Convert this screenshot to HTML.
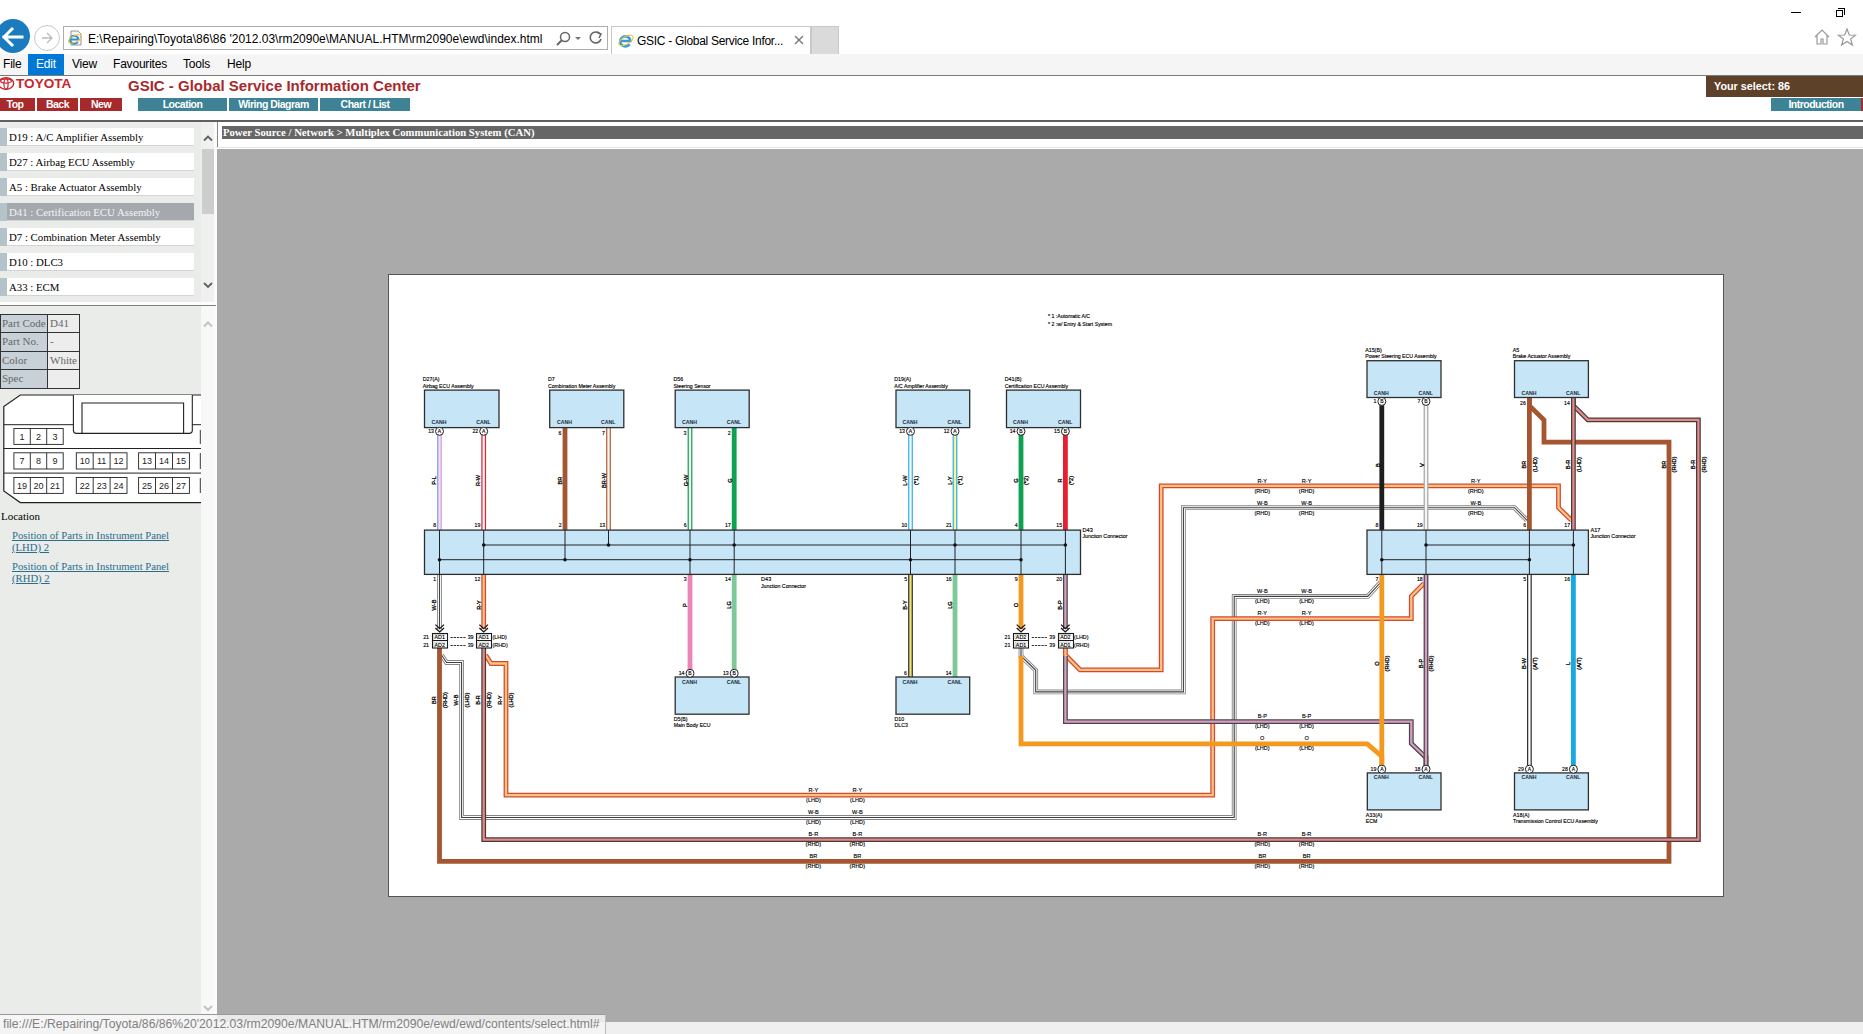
<!DOCTYPE html>
<html><head><meta charset="utf-8">
<style>
*{margin:0;padding:0;box-sizing:border-box}
html,body{width:1863px;height:1034px;overflow:hidden;background:#fff;font-family:"Liberation Sans",sans-serif}
.a{position:absolute}
.menu span{position:absolute;top:0;height:21px;line-height:21px;font-size:12px;letter-spacing:-0.2px;color:#000}
.btn{position:absolute;height:13px;line-height:13px;font-size:10.5px;letter-spacing:-0.5px;font-weight:bold;color:#fff;text-align:center}
.red{background:#a8292c}
.teal{background:#3d8295}
.li{position:absolute;left:0;width:194px;height:18px}
.li .s{position:absolute;left:0;top:0;width:7px;height:18px;background:#b4c2ca}
.li .t{position:absolute;left:7px;top:0;width:187px;height:18px;background:#fff;border-bottom:1px solid #d4d4d4;font-family:"Liberation Serif",serif;font-size:10.8px;line-height:18px;padding-left:2px;color:#000}
.li.sel .t{background:#a4a9ae;color:#f4f4f4}
.pt td{border:1px solid #333;font-family:"Liberation Serif",serif;font-size:11px;color:#666;height:19px;padding:0 2px}
</style></head><body>
<!-- title bar / window -->
<div class="a" style="left:1791px;top:12px;width:10px;height:1px;background:#000"></div>
<div class="a" style="left:1836px;top:10px;width:7px;height:7px;border:1px solid #000;background:#fff"></div>
<div class="a" style="left:1838px;top:8px;width:7px;height:7px;border-top:1px solid #000;border-right:1px solid #000"></div>

<!-- back / forward -->
<div class="a" style="left:-4px;top:19px;width:34px;height:34px;border-radius:50%;background:#1a7bbf;overflow:hidden"></div>
<div class="a" style="left:0;top:53px;width:40px;height:2px;background:#fff"></div>
<svg class="a" style="left:0;top:25px" width="30" height="26"><path d="M4 12 L12 4 M4 12 L12 20 M4 12 L22 12" stroke="#fff" stroke-width="3" fill="none" stroke-linecap="square"/></svg>
<div class="a" style="left:34px;top:25px;width:26px;height:26px;border-radius:50%;border:1px solid #c8c8c8"></div>
<svg class="a" style="left:34px;top:25px" width="26" height="26"><path d="M8 13 H18 M13 8 L18 13 L13 18" stroke="#bbb" stroke-width="1.3" fill="none"/></svg>

<!-- address bar -->
<div class="a" style="left:63px;top:26px;width:545px;height:24px;border:1px solid #adadad;background:#fff"></div>
<svg class="a" style="left:66px;top:29px" width="18" height="18"><path d="M5 2 H12 L15 5 V16 H5Z" fill="#f6f6f6" stroke="#8a8a8a" stroke-width="0.9"/><path d="M4.5 10.5 H12.5 A4.2 4 0 1 0 11.8 13" fill="none" stroke="#2f8fdc" stroke-width="2"/><ellipse cx="8.8" cy="10" rx="7" ry="3.2" transform="rotate(-28 8.8 10)" fill="none" stroke="#f0c020" stroke-width="0.9"/></svg>
<div class="a" style="left:88px;top:30px;font-size:12px;line-height:18px;color:#000;white-space:nowrap">E:\Repairing\Toyota\86\86 '2012.03\rm2090e\MANUAL.HTM\rm2090e\ewd\index.html</div>
<svg class="a" style="left:555px;top:30px" width="50" height="18"><circle cx="10" cy="7" r="4.5" stroke="#666" stroke-width="1.5" fill="none"/><path d="M7 10 L2 15" stroke="#666" stroke-width="2"/><path d="M20 7 L26 7 L23 10Z" fill="#777"/><path d="M45 4 A5.5 5.5 0 1 0 46 9" stroke="#666" stroke-width="1.6" fill="none"/><path d="M42 2 L46 4 L44 8" stroke="#666" stroke-width="1.5" fill="none"/></svg>

<!-- tab -->
<div class="a" style="left:611px;top:26px;width:200px;height:29px;border:1px solid #c8c8c8;border-bottom:none;background:#fff"></div>
<svg class="a" style="left:617px;top:31px" width="18" height="18"><path d="M3.5 10 H13.5 A5.2 5 0 1 0 12.6 13.2" fill="none" stroke="#3a9be0" stroke-width="2.6"/><ellipse cx="9" cy="9.5" rx="8" ry="3.8" transform="rotate(-30 9 9.5)" fill="none" stroke="#f2c230" stroke-width="1.1"/></svg>
<div class="a" style="left:637px;top:32px;font-size:12px;letter-spacing:-0.29px;line-height:18px;color:#000;white-space:nowrap">GSIC - Global Service Infor...</div>
<svg class="a" style="left:794px;top:35px" width="10" height="10"><path d="M1 1 L9 9 M9 1 L1 9" stroke="#777" stroke-width="1.4"/></svg>
<div class="a" style="left:811px;top:26px;width:28px;height:28px;background:#dadada;border:1px solid #c8c8c8;border-bottom:none"></div>

<!-- home / star -->
<svg class="a" style="left:1812px;top:27px" width="45" height="20"><path d="M3 10 L10 3 L17 10 M5 8 V17 H9 V12 H11 V17 H15 V8" stroke="#999" stroke-width="1.2" fill="none"/><path d="M35 2 L37.3 8 L43.5 8.2 L38.6 12 L40.4 18 L35 14.5 L29.6 18 L31.4 12 L26.5 8.2 L32.7 8Z" stroke="#999" stroke-width="1.2" fill="none"/></svg>

<!-- menu bar -->
<div class="a menu" style="left:0;top:54px;width:1863px;height:21px;background:#f5f5f5">
  <div class="a" style="left:28px;top:0;width:36px;height:21px;background:#0078d7"></div>
  <span style="left:3px">File</span>
  <span style="left:36px;color:#fff">Edit</span>
  <span style="left:72px">View</span>
  <span style="left:113px">Favourites</span>
  <span style="left:183px">Tools</span>
  <span style="left:227px">Help</span>
</div>
<div class="a" style="left:0;top:75px;width:1863px;height:1px;background:#7a7a7a"></div>

<!-- page header -->
<svg class="a" style="left:0;top:76px" width="16" height="15"><ellipse cx="6" cy="7.4" rx="7.6" ry="5.8" fill="none" stroke="#c8262c" stroke-width="1.4"/><ellipse cx="6" cy="7.9" rx="2.1" ry="5.3" fill="none" stroke="#c8262c" stroke-width="1.2"/><ellipse cx="6" cy="5" rx="5.4" ry="2.2" fill="none" stroke="#c8262c" stroke-width="1.2"/></svg>
<div class="a" style="left:16px;top:76px;font-size:13.6px;font-weight:bold;color:#c8262c;line-height:16px;letter-spacing:0px">TOYOTA</div>
<div class="a" style="left:128px;top:76px;font-size:15px;font-weight:bold;color:#a8292c;line-height:19px;white-space:nowrap">GSIC - Global Service Information Center</div>

<div class="btn red" style="left:-5px;top:98px;width:40px">Top</div>
<div class="btn red" style="left:37px;top:98px;width:41px">Back</div>
<div class="btn red" style="left:80px;top:98px;width:42px">New</div>
<div class="btn teal" style="left:138px;top:98px;width:89px">Location</div>
<div class="btn teal" style="left:229px;top:98px;width:89px">Wiring Diagram</div>
<div class="btn teal" style="left:320px;top:98px;width:90px">Chart / List</div>

<div class="a" style="left:1706px;top:76px;width:157px;height:21px;background:#5e4129;color:#fff;font-weight:bold;font-size:10.8px;line-height:21px;padding-left:8px">Your select: 86</div>
<div class="btn teal" style="left:1771px;top:98px;width:90px">Introduction</div>
<div class="a" style="left:1861px;top:98px;width:2px;height:13px;background:#a8292c"></div>

<div class="a" style="left:0;top:120px;width:1863px;height:2px;background:#606060"></div>

<!-- LEFT PANE -->
<div class="a" style="left:0;top:122px;width:214px;height:892px;background:#e9ece9"></div>
<div class="a" style="left:214px;top:122px;width:3px;height:892px;background:#fbfbfb"></div>
<!-- list scrollbar -->
<div class="a" style="left:201px;top:122px;width:13px;height:182px;background:#f0f0f0"></div>
<div class="a" style="left:202px;top:149px;width:12px;height:65px;background:#cdcdcd"></div>
<svg class="a" style="left:201px;top:132px" width="14" height="12"><path d="M3 8.5 L7 4.5 L11 8.5" stroke="#606060" stroke-width="1.8" fill="none"/></svg>
<svg class="a" style="left:201px;top:279px" width="14" height="12"><path d="M3 4 L7 8 L11 4" stroke="#606060" stroke-width="1.8" fill="none"/></svg>

<div class="li" style="top:128px"><div class="s"></div><div class="t">D19 : A/C Amplifier Assembly</div></div>
<div class="li" style="top:153px"><div class="s"></div><div class="t">D27 : Airbag ECU Assembly</div></div>
<div class="li" style="top:178px"><div class="s"></div><div class="t">A5 : Brake Actuator Assembly</div></div>
<div class="li sel" style="top:203px"><div class="s"></div><div class="t">D41 : Certification ECU Assembly</div></div>
<div class="li" style="top:228px"><div class="s"></div><div class="t">D7 : Combination Meter Assembly</div></div>
<div class="li" style="top:253px"><div class="s"></div><div class="t">D10 : DLC3</div></div>
<div class="li" style="top:278px"><div class="s"></div><div class="t">A33 : ECM</div></div>

<div class="a" style="left:0;top:302px;width:214px;height:3px;background:#fdfdfd"></div><div class="a" style="left:0;top:305px;width:216px;height:1px;background:#808080"></div>
<div class="a" style="left:201px;top:306px;width:13px;height:708px;background:#f8f8f8"></div>
<svg class="a" style="left:201px;top:318px" width="14" height="12"><path d="M3 8.5 L7 4.5 L11 8.5" stroke="#c4c4c4" stroke-width="2" fill="none"/></svg>
<svg class="a" style="left:201px;top:1002px" width="14" height="12"><path d="M3 4 L7 8 L11 4" stroke="#c4c4c4" stroke-width="2" fill="none"/></svg>


<!-- part table -->
<div class="a" style="left:0;top:314px;width:81px;height:75px">
 <div class="a" style="left:0;top:0;width:48px;height:19px;background:#c9d1d8;border:1px solid #333"></div>
 <div class="a" style="left:47px;top:0;width:33px;height:19px;background:#ededed;border:1px solid #333"></div>
 <div class="a" style="left:0;top:18px;width:48px;height:20px;background:#c9d1d8;border:1px solid #333"></div>
 <div class="a" style="left:47px;top:18px;width:33px;height:20px;background:#ededed;border:1px solid #333"></div>
 <div class="a" style="left:0;top:37px;width:48px;height:19px;background:#c9d1d8;border:1px solid #333"></div>
 <div class="a" style="left:47px;top:37px;width:33px;height:19px;background:#ededed;border:1px solid #333"></div>
 <div class="a" style="left:0;top:55px;width:48px;height:20px;background:#c9d1d8;border:1px solid #333"></div>
 <div class="a" style="left:47px;top:55px;width:33px;height:20px;background:#ededed;border:1px solid #333"></div>
 <div class="a" style="left:2px;top:1px;font-family:'Liberation Serif',serif;font-size:11px;line-height:17px;color:#666">Part Code</div>
 <div class="a" style="left:50px;top:1px;font-family:'Liberation Serif',serif;font-size:11px;line-height:17px;color:#666">D41</div>
 <div class="a" style="left:2px;top:19px;font-family:'Liberation Serif',serif;font-size:11px;line-height:17px;color:#666">Part No.</div>
 <div class="a" style="left:50px;top:19px;font-family:'Liberation Serif',serif;font-size:11px;line-height:17px;color:#666">-</div>
 <div class="a" style="left:2px;top:38px;font-family:'Liberation Serif',serif;font-size:11px;line-height:17px;color:#666">Color</div>
 <div class="a" style="left:50px;top:38px;font-family:'Liberation Serif',serif;font-size:11px;line-height:17px;color:#666">White</div>
 <div class="a" style="left:2px;top:56px;font-family:'Liberation Serif',serif;font-size:11px;line-height:17px;color:#666">Spec</div>
</div>
<!-- connector drawing -->
<svg class="a" style="left:0;top:390px" width="201" height="116" font-family="Liberation Sans, sans-serif">
 <path d="M201 5 H20.3 L3.8 16.5 V101 L20.3 112.6 H201" fill="#fff" stroke="#222" stroke-width="1.2"/>
 <path d="M3.8 34.7 H73.4 M192.3 34.7 H201 M3.8 58.5 H201 M3.8 83.1 H201" stroke="#222" stroke-width="1" fill="none"/>
 <path d="M73.4 5 V40.5 Q73.4 43.4 76.4 43.4 H189.3 Q192.3 43.4 192.3 40.5 V5" fill="#fff" stroke="#222" stroke-width="1.1"/>
 <path d="M82 43 V13 H183.6 V43" fill="none" stroke="#222" stroke-width="1.1"/>
 <g fill="none" stroke="#222" stroke-width="0.9">
  <rect x="13.9" y="38.5" width="49.3" height="15.9"/><path d="M30.3 38.5 V54.4 M46.7 38.5 V54.4"/>
  <rect x="13.9" y="62.8" width="49.3" height="16.2"/><path d="M30.3 62.8 V79 M46.7 62.8 V79"/>
  <rect x="76.3" y="62.8" width="50.7" height="16.2"/><path d="M93.2 62.8 V79 M110.1 62.8 V79"/>
  <rect x="138.6" y="62.8" width="50.8" height="16.2"/><path d="M155.5 62.8 V79 M172.5 62.8 V79"/>
  <rect x="13.9" y="87.5" width="49.3" height="15.9"/><path d="M30.3 87.5 V103.4 M46.7 87.5 V103.4"/>
  <rect x="76.3" y="87.5" width="50.7" height="15.9"/><path d="M93.2 87.5 V103.4 M110.1 87.5 V103.4"/>
  <rect x="138.6" y="87.5" width="50.8" height="15.9"/><path d="M155.5 87.5 V103.4 M172.5 87.5 V103.4"/>
  <path d="M200.3 40 V54 M200.3 63 V79 M200.3 88 V103"/>
 </g>
 <g font-size="9" fill="#222" text-anchor="middle">
  <text x="22.1" y="49.8">1</text><text x="38.5" y="49.8">2</text><text x="54.9" y="49.8">3</text>
  <text x="22.1" y="74.2">7</text><text x="38.5" y="74.2">8</text><text x="54.9" y="74.2">9</text>
  <text x="84.8" y="74.2">10</text><text x="101.7" y="74.2">11</text><text x="118.6" y="74.2">12</text>
  <text x="147.1" y="74.2">13</text><text x="164" y="74.2">14</text><text x="181" y="74.2">15</text>
  <text x="22.1" y="98.8">19</text><text x="38.5" y="98.8">20</text><text x="54.9" y="98.8">21</text>
  <text x="84.8" y="98.8">22</text><text x="101.7" y="98.8">23</text><text x="118.6" y="98.8">24</text>
  <text x="147.1" y="98.8">25</text><text x="164" y="98.8">26</text><text x="181" y="98.8">27</text>
 </g>
</svg>
<div class="a" style="left:1px;top:509px;font-family:'Liberation Serif',serif;font-size:11px;line-height:14px;color:#000">Location</div>
<div class="a" style="left:12px;top:529px;width:180px;font-family:'Liberation Serif',serif;font-size:10.7px;line-height:12px;color:#2b6c8c;text-decoration:underline">Position of Parts in Instrument Panel<br>(LHD) 2</div>
<div class="a" style="left:12px;top:560px;width:180px;font-family:'Liberation Serif',serif;font-size:10.7px;line-height:12px;color:#2b6c8c;text-decoration:underline">Position of Parts in Instrument Panel<br>(RHD) 2</div>

<!-- MAIN PANE -->
<div class="a" style="left:217px;top:122px;width:1646px;height:27px;background:#fff"></div>
<div class="a" style="left:217px;top:122px;width:1px;height:26px;background:#888"></div>
<div class="a" style="left:222px;top:126px;width:1641px;height:13px;background:#666"></div>
<div class="a" style="left:223px;top:125px;font-family:'Liberation Serif',serif;font-weight:bold;font-size:10.7px;line-height:15px;color:#fff;white-space:nowrap">Power Source / Network &gt; Multiplex Communication System (CAN)</div>
<div class="a" style="left:217px;top:147px;width:1646px;height:1px;background:#e4e4e4"></div>
<div class="a" style="left:217px;top:149px;width:1646px;height:873px;background:#aaa"></div>
<div class="a" style="left:0;top:1022px;width:1863px;height:12px;background:#efefef"></div>

<!-- DIAGRAM -->
<div class="a" style="left:388px;top:274px;width:1336px;height:623px;border:1px solid #555;background:#fff"></div>
<svg class="a" id="dg" style="left:0;top:0" width="1863" height="1034" viewBox="0 0 1863 1034">
<g font-family="Liberation Sans, sans-serif" stroke-width="0">
<rect x="437.1" y="431" width="4.8" height="99.1" fill="#ece2f6"/>
<rect x="437.1" y="431" width="1.3" height="99.1" fill="#8f9ee6"/>
<rect x="440.6" y="431" width="1.3" height="99.1" fill="#e2a4e2"/>
<polyline points="483.7,431.0 483.7,530.1" fill="none" stroke="#d8283a" stroke-width="4.8" stroke-linejoin="miter" stroke-miterlimit="3"/>
<polyline points="483.7,431.0 483.7,530.1" fill="none" stroke="#fff3f3" stroke-width="2.3" stroke-linejoin="miter" stroke-miterlimit="3"/>
<polyline points="565.0,427.6 565.0,530.1" fill="none" stroke="#a5552f" stroke-width="4.8" stroke-linejoin="miter" stroke-miterlimit="3"/>
<polyline points="608.5,427.6 608.5,530.1" fill="none" stroke="#b0623a" stroke-width="4.8" stroke-linejoin="miter" stroke-miterlimit="3"/>
<polyline points="608.5,427.6 608.5,530.1" fill="none" stroke="#fff8f2" stroke-width="2.3" stroke-linejoin="miter" stroke-miterlimit="3"/>
<polyline points="690.0,427.6 690.0,530.1" fill="none" stroke="#1f9c55" stroke-width="4.8" stroke-linejoin="miter" stroke-miterlimit="3"/>
<polyline points="690.0,427.6 690.0,530.1" fill="none" stroke="#eefaf2" stroke-width="2.3" stroke-linejoin="miter" stroke-miterlimit="3"/>
<polyline points="734.2,427.6 734.2,530.1" fill="none" stroke="#0ea14f" stroke-width="4.8" stroke-linejoin="miter" stroke-miterlimit="3"/>
<polyline points="910.5,431.0 910.5,530.1" fill="none" stroke="#38b2e6" stroke-width="4.8" stroke-linejoin="miter" stroke-miterlimit="3"/>
<polyline points="910.5,431.0 910.5,530.1" fill="none" stroke="#f4fbff" stroke-width="2.3" stroke-linejoin="miter" stroke-miterlimit="3"/>
<polyline points="955.0,431.0 955.0,530.1" fill="none" stroke="#38b2e6" stroke-width="4.8" stroke-linejoin="miter" stroke-miterlimit="3"/>
<polyline points="955.0,431.0 955.0,530.1" fill="none" stroke="#f6f39a" stroke-width="2.3" stroke-linejoin="miter" stroke-miterlimit="3"/>
<polyline points="1021.0,431.0 1021.0,530.1" fill="none" stroke="#0ea14f" stroke-width="4.8" stroke-linejoin="miter" stroke-miterlimit="3"/>
<polyline points="1065.4,431.0 1065.4,530.1" fill="none" stroke="#e8202e" stroke-width="4.8" stroke-linejoin="miter" stroke-miterlimit="3"/>
<polyline points="690.0,574.4 690.0,670.0" fill="none" stroke="#ea85b6" stroke-width="4.8" stroke-linejoin="miter" stroke-miterlimit="3"/>
<polyline points="734.2,574.4 734.2,670.0" fill="none" stroke="#7fc999" stroke-width="4.8" stroke-linejoin="miter" stroke-miterlimit="3"/>
<polyline points="910.5,574.4 910.5,677.0" fill="none" stroke="#333333" stroke-width="4.8" stroke-linejoin="miter" stroke-miterlimit="3"/>
<polyline points="910.5,574.4 910.5,677.0" fill="none" stroke="#f2e36a" stroke-width="2.3" stroke-linejoin="miter" stroke-miterlimit="3"/>
<polyline points="955.0,574.4 955.0,677.0" fill="none" stroke="#7fc999" stroke-width="4.8" stroke-linejoin="miter" stroke-miterlimit="3"/>
<polyline points="1529.4,574.4 1529.4,766.0" fill="none" stroke="#333333" stroke-width="4.8" stroke-linejoin="miter" stroke-miterlimit="3"/>
<polyline points="1529.4,574.4 1529.4,766.0" fill="none" stroke="#ffffff" stroke-width="2.3" stroke-linejoin="miter" stroke-miterlimit="3"/>
<polyline points="1573.4,574.4 1573.4,766.0" fill="none" stroke="#16a9e2" stroke-width="4.8" stroke-linejoin="miter" stroke-miterlimit="3"/>
<polyline points="1021.0,648.0 1021.0,656.0 1035.7,670.3 1035.7,691.9 1183.4,691.9 1183.4,507.7 1514.5,507.7 1527.0,520.3" fill="none" stroke="#858585" stroke-width="4.8" stroke-linejoin="miter" stroke-miterlimit="3"/>
<polyline points="1021.0,648.0 1021.0,656.0 1035.7,670.3 1035.7,691.9 1183.4,691.9 1183.4,507.7 1514.5,507.7 1527.0,520.3" fill="none" stroke="#ffffff" stroke-width="3.0" stroke-linejoin="miter" stroke-miterlimit="3"/>
<polyline points="1021.0,648.0 1021.0,656.0 1035.7,670.3 1035.7,691.9 1183.4,691.9 1183.4,507.7 1514.5,507.7 1527.0,520.3" fill="none" stroke="#404040" stroke-width="1.1" stroke-linejoin="miter"/>
<polyline points="1065.4,648.0 1065.4,655.0 1080.0,669.8 1161.2,669.8 1161.2,485.9 1558.5,485.9 1558.5,507.7 1571.5,520.3" fill="none" stroke="#d24836" stroke-width="4.8" stroke-linejoin="miter" stroke-miterlimit="3"/>
<polyline points="1065.4,648.0 1065.4,655.0 1080.0,669.8 1161.2,669.8 1161.2,485.9 1558.5,485.9 1558.5,507.7 1571.5,520.3" fill="none" stroke="#fdc47c" stroke-width="2.3" stroke-linejoin="miter" stroke-miterlimit="3"/>
<polyline points="441.5,655.0 446.5,662.5 461.6,662.5 461.6,817.5 1234.2,817.5 1234.2,596.4 1367.7,596.4 1381.0,582.0" fill="none" stroke="#858585" stroke-width="4.8" stroke-linejoin="miter" stroke-miterlimit="3"/>
<polyline points="441.5,655.0 446.5,662.5 461.6,662.5 461.6,817.5 1234.2,817.5 1234.2,596.4 1367.7,596.4 1381.0,582.0" fill="none" stroke="#ffffff" stroke-width="3.0" stroke-linejoin="miter" stroke-miterlimit="3"/>
<polyline points="441.5,655.0 446.5,662.5 461.6,662.5 461.6,817.5 1234.2,817.5 1234.2,596.4 1367.7,596.4 1381.0,582.0" fill="none" stroke="#404040" stroke-width="1.1" stroke-linejoin="miter"/>
<polyline points="485.7,655.0 491.0,663.5 506.0,663.5 506.0,795.2 1212.7,795.2 1212.7,618.6 1411.3,618.6 1411.3,596.2 1424.0,583.4" fill="none" stroke="#d24836" stroke-width="4.8" stroke-linejoin="miter" stroke-miterlimit="3"/>
<polyline points="485.7,655.0 491.0,663.5 506.0,663.5 506.0,795.2 1212.7,795.2 1212.7,618.6 1411.3,618.6 1411.3,596.2 1424.0,583.4" fill="none" stroke="#fdc47c" stroke-width="2.3" stroke-linejoin="miter" stroke-miterlimit="3"/>
<polyline points="439.5,648.0 439.5,861.4 1669.0,861.4 1669.0,442.2 1544.0,442.2 1544.0,420.0 1529.4,405.6 1529.4,397.5" fill="none" stroke="#a5552f" stroke-width="4.8" stroke-linejoin="miter" stroke-miterlimit="3"/>
<polyline points="483.7,648.0 483.7,839.6 1698.4,839.6 1698.4,419.9 1587.8,419.9 1573.4,405.6 1573.4,397.5" fill="none" stroke="#4a3a3a" stroke-width="4.8" stroke-linejoin="miter" stroke-miterlimit="3"/>
<polyline points="483.7,648.0 483.7,839.6 1698.4,839.6 1698.4,419.9 1587.8,419.9 1573.4,405.6 1573.4,397.5" fill="none" stroke="#e28a8a" stroke-width="2.3" stroke-linejoin="miter" stroke-miterlimit="3"/>
<polyline points="1065.4,656.0 1065.4,721.6 1411.3,721.6 1411.3,743.5 1424.8,756.4 1426.0,757.0 1426.0,766.0" fill="none" stroke="#4e444c" stroke-width="4.8" stroke-linejoin="miter" stroke-miterlimit="3"/>
<polyline points="1065.4,656.0 1065.4,721.6 1411.3,721.6 1411.3,743.5 1424.8,756.4 1426.0,757.0 1426.0,766.0" fill="none" stroke="#d4a0c0" stroke-width="2.3" stroke-linejoin="miter" stroke-miterlimit="3"/>
<polyline points="1021.0,656.0 1021.0,743.9 1367.3,743.9 1381.8,756.4 1381.8,766.0" fill="none" stroke="#f3991f" stroke-width="4.8" stroke-linejoin="miter" stroke-miterlimit="3"/>
<polyline points="1381.8,401.0 1381.8,530.1" fill="none" stroke="#1e1e1e" stroke-width="4.8" stroke-linejoin="miter" stroke-miterlimit="3"/>
<polyline points="1426.0,401.0 1426.0,530.1" fill="none" stroke="#a8a8a8" stroke-width="4.8" stroke-linejoin="miter" stroke-miterlimit="3"/>
<polyline points="1426.0,401.0 1426.0,530.1" fill="none" stroke="#f6f6f6" stroke-width="2.3" stroke-linejoin="miter" stroke-miterlimit="3"/>
<polyline points="1529.4,397.5 1529.4,530.1" fill="none" stroke="#a5552f" stroke-width="4.8" stroke-linejoin="miter" stroke-miterlimit="3"/>
<polyline points="1573.4,397.5 1573.4,530.1" fill="none" stroke="#4a3a3a" stroke-width="4.8" stroke-linejoin="miter" stroke-miterlimit="3"/>
<polyline points="1573.4,397.5 1573.4,530.1" fill="none" stroke="#e28a8a" stroke-width="2.3" stroke-linejoin="miter" stroke-miterlimit="3"/>
<polyline points="1381.8,574.4 1381.8,766.0" fill="none" stroke="#f3991f" stroke-width="4.8" stroke-linejoin="miter" stroke-miterlimit="3"/>
<polyline points="1426.0,574.4 1426.0,766.0" fill="none" stroke="#4e444c" stroke-width="4.8" stroke-linejoin="miter" stroke-miterlimit="3"/>
<polyline points="1426.0,574.4 1426.0,766.0" fill="none" stroke="#d4a0c0" stroke-width="2.3" stroke-linejoin="miter" stroke-miterlimit="3"/>
<polyline points="439.5,574.4 439.5,629.0" fill="none" stroke="#858585" stroke-width="4.8" stroke-linejoin="miter" stroke-miterlimit="3"/>
<polyline points="439.5,574.4 439.5,629.0" fill="none" stroke="#ffffff" stroke-width="3.0" stroke-linejoin="miter" stroke-miterlimit="3"/>
<polyline points="439.5,574.4 439.5,629.0" fill="none" stroke="#404040" stroke-width="1.1" stroke-linejoin="miter"/>
<polyline points="483.7,574.4 483.7,629.0" fill="none" stroke="#d24836" stroke-width="4.8" stroke-linejoin="miter" stroke-miterlimit="3"/>
<polyline points="483.7,574.4 483.7,629.0" fill="none" stroke="#fdc47c" stroke-width="2.3" stroke-linejoin="miter" stroke-miterlimit="3"/>
<polyline points="1021.0,574.4 1021.0,629.0" fill="none" stroke="#f3991f" stroke-width="4.8" stroke-linejoin="miter" stroke-miterlimit="3"/>
<polyline points="1065.4,574.4 1065.4,629.0" fill="none" stroke="#4e444c" stroke-width="4.8" stroke-linejoin="miter" stroke-miterlimit="3"/>
<polyline points="1065.4,574.4 1065.4,629.0" fill="none" stroke="#d4a0c0" stroke-width="2.3" stroke-linejoin="miter" stroke-miterlimit="3"/>
<rect x="424.5" y="390.1" width="74.5" height="37.5" fill="#c6e6f8" stroke="#2e2e2e" stroke-width="1.3"/>
<text x="422.7" y="381.3" font-size="5.3" text-anchor="start" font-weight="normal" fill="#000" stroke="#000" stroke-width="0.14">D27(A)</text>
<text x="422.7" y="387.9" font-size="5.2" text-anchor="start" font-weight="normal" fill="#000" stroke="#000" stroke-width="0.14">Airbag ECU Assembly</text>
<text x="431.5" y="423.8" font-size="5.2" text-anchor="start" font-weight="bold" fill="#1a2633" stroke="#1a2633" stroke-width="0">CANH</text>
<text x="476.2" y="423.8" font-size="5.2" text-anchor="start" font-weight="bold" fill="#1a2633" stroke="#1a2633" stroke-width="0">CANL</text>
<circle cx="439.5" cy="431.3" r="4" fill="#fff" stroke="#222" stroke-width="1"/>
<text x="439.5" y="433.3" font-size="5" text-anchor="middle" font-weight="normal" fill="#000" stroke="#000" stroke-width="0.14">A</text>
<text x="434.0" y="433.3" font-size="5.2" text-anchor="end" font-weight="normal" fill="#000" stroke="#000" stroke-width="0.14">13</text>
<circle cx="483.7" cy="431.3" r="4" fill="#fff" stroke="#222" stroke-width="1"/>
<text x="483.7" y="433.3" font-size="5" text-anchor="middle" font-weight="normal" fill="#000" stroke="#000" stroke-width="0.14">A</text>
<text x="478.2" y="433.3" font-size="5.2" text-anchor="end" font-weight="normal" fill="#000" stroke="#000" stroke-width="0.14">22</text>
<rect x="549.7" y="390.1" width="74.1" height="37.5" fill="#c6e6f8" stroke="#2e2e2e" stroke-width="1.3"/>
<text x="547.9" y="381.3" font-size="5.3" text-anchor="start" font-weight="normal" fill="#000" stroke="#000" stroke-width="0.14">D7</text>
<text x="547.9" y="387.9" font-size="5.2" text-anchor="start" font-weight="normal" fill="#000" stroke="#000" stroke-width="0.14">Combination Meter Assembly</text>
<text x="557.0" y="423.8" font-size="5.2" text-anchor="start" font-weight="bold" fill="#1a2633" stroke="#1a2633" stroke-width="0">CANH</text>
<text x="601.0" y="423.8" font-size="5.2" text-anchor="start" font-weight="bold" fill="#1a2633" stroke="#1a2633" stroke-width="0">CANL</text>
<text x="561.5" y="434.6" font-size="5.2" text-anchor="end" font-weight="normal" fill="#000" stroke="#000" stroke-width="0.14">6</text>
<text x="605.0" y="434.6" font-size="5.2" text-anchor="end" font-weight="normal" fill="#000" stroke="#000" stroke-width="0.14">7</text>
<rect x="675.2" y="390.1" width="74.0" height="37.5" fill="#c6e6f8" stroke="#2e2e2e" stroke-width="1.3"/>
<text x="673.4" y="381.3" font-size="5.3" text-anchor="start" font-weight="normal" fill="#000" stroke="#000" stroke-width="0.14">D56</text>
<text x="673.4" y="387.9" font-size="5.2" text-anchor="start" font-weight="normal" fill="#000" stroke="#000" stroke-width="0.14">Steering Sensor</text>
<text x="682.0" y="423.8" font-size="5.2" text-anchor="start" font-weight="bold" fill="#1a2633" stroke="#1a2633" stroke-width="0">CANH</text>
<text x="726.7" y="423.8" font-size="5.2" text-anchor="start" font-weight="bold" fill="#1a2633" stroke="#1a2633" stroke-width="0">CANL</text>
<text x="686.5" y="434.6" font-size="5.2" text-anchor="end" font-weight="normal" fill="#000" stroke="#000" stroke-width="0.14">3</text>
<text x="730.7" y="434.6" font-size="5.2" text-anchor="end" font-weight="normal" fill="#000" stroke="#000" stroke-width="0.14">2</text>
<rect x="896.0" y="390.1" width="73.7" height="37.5" fill="#c6e6f8" stroke="#2e2e2e" stroke-width="1.3"/>
<text x="894.2" y="381.3" font-size="5.3" text-anchor="start" font-weight="normal" fill="#000" stroke="#000" stroke-width="0.14">D19(A)</text>
<text x="894.2" y="387.9" font-size="5.2" text-anchor="start" font-weight="normal" fill="#000" stroke="#000" stroke-width="0.14">A/C Amplifier Assembly</text>
<text x="902.5" y="423.8" font-size="5.2" text-anchor="start" font-weight="bold" fill="#1a2633" stroke="#1a2633" stroke-width="0">CANH</text>
<text x="947.5" y="423.8" font-size="5.2" text-anchor="start" font-weight="bold" fill="#1a2633" stroke="#1a2633" stroke-width="0">CANL</text>
<circle cx="910.5" cy="431.3" r="4" fill="#fff" stroke="#222" stroke-width="1"/>
<text x="910.5" y="433.3" font-size="5" text-anchor="middle" font-weight="normal" fill="#000" stroke="#000" stroke-width="0.14">A</text>
<text x="905.0" y="433.3" font-size="5.2" text-anchor="end" font-weight="normal" fill="#000" stroke="#000" stroke-width="0.14">13</text>
<circle cx="955.0" cy="431.3" r="4" fill="#fff" stroke="#222" stroke-width="1"/>
<text x="955.0" y="433.3" font-size="5" text-anchor="middle" font-weight="normal" fill="#000" stroke="#000" stroke-width="0.14">A</text>
<text x="949.5" y="433.3" font-size="5.2" text-anchor="end" font-weight="normal" fill="#000" stroke="#000" stroke-width="0.14">12</text>
<rect x="1006.5" y="390.1" width="74.0" height="37.5" fill="#c6e6f8" stroke="#2e2e2e" stroke-width="1.3"/>
<text x="1004.7" y="381.3" font-size="5.3" text-anchor="start" font-weight="normal" fill="#000" stroke="#000" stroke-width="0.14">D41(B)</text>
<text x="1004.7" y="387.9" font-size="5.2" text-anchor="start" font-weight="normal" fill="#000" stroke="#000" stroke-width="0.14">Certification ECU Assembly</text>
<text x="1013.0" y="423.8" font-size="5.2" text-anchor="start" font-weight="bold" fill="#1a2633" stroke="#1a2633" stroke-width="0">CANH</text>
<text x="1057.9" y="423.8" font-size="5.2" text-anchor="start" font-weight="bold" fill="#1a2633" stroke="#1a2633" stroke-width="0">CANL</text>
<circle cx="1021.0" cy="431.3" r="4" fill="#fff" stroke="#222" stroke-width="1"/>
<text x="1021.0" y="433.3" font-size="5" text-anchor="middle" font-weight="normal" fill="#000" stroke="#000" stroke-width="0.14">B</text>
<text x="1015.5" y="433.3" font-size="5.2" text-anchor="end" font-weight="normal" fill="#000" stroke="#000" stroke-width="0.14">14</text>
<circle cx="1065.4" cy="431.3" r="4" fill="#fff" stroke="#222" stroke-width="1"/>
<text x="1065.4" y="433.3" font-size="5" text-anchor="middle" font-weight="normal" fill="#000" stroke="#000" stroke-width="0.14">B</text>
<text x="1059.9" y="433.3" font-size="5.2" text-anchor="end" font-weight="normal" fill="#000" stroke="#000" stroke-width="0.14">15</text>
<rect x="1367.0" y="360.7" width="74.0" height="36.8" fill="#c6e6f8" stroke="#2e2e2e" stroke-width="1.3"/>
<text x="1365.2" y="351.9" font-size="5.3" text-anchor="start" font-weight="normal" fill="#000" stroke="#000" stroke-width="0.14">A15(B)</text>
<text x="1365.2" y="358.3" font-size="5.2" text-anchor="start" font-weight="normal" fill="#000" stroke="#000" stroke-width="0.14">Power Steering ECU Assembly</text>
<text x="1373.8" y="394.5" font-size="5.2" text-anchor="start" font-weight="bold" fill="#1a2633" stroke="#1a2633" stroke-width="0">CANH</text>
<text x="1418.5" y="394.5" font-size="5.2" text-anchor="start" font-weight="bold" fill="#1a2633" stroke="#1a2633" stroke-width="0">CANL</text>
<circle cx="1381.8" cy="401.4" r="4" fill="#fff" stroke="#222" stroke-width="1"/>
<text x="1381.8" y="403.4" font-size="5" text-anchor="middle" font-weight="normal" fill="#000" stroke="#000" stroke-width="0.14">B</text>
<text x="1376.3" y="403.4" font-size="5.2" text-anchor="end" font-weight="normal" fill="#000" stroke="#000" stroke-width="0.14">1</text>
<circle cx="1426.0" cy="401.4" r="4" fill="#fff" stroke="#222" stroke-width="1"/>
<text x="1426.0" y="403.4" font-size="5" text-anchor="middle" font-weight="normal" fill="#000" stroke="#000" stroke-width="0.14">B</text>
<text x="1420.5" y="403.4" font-size="5.2" text-anchor="end" font-weight="normal" fill="#000" stroke="#000" stroke-width="0.14">7</text>
<rect x="1514.5" y="360.7" width="73.9" height="36.8" fill="#c6e6f8" stroke="#2e2e2e" stroke-width="1.3"/>
<text x="1512.7" y="351.9" font-size="5.3" text-anchor="start" font-weight="normal" fill="#000" stroke="#000" stroke-width="0.14">A5</text>
<text x="1512.7" y="358.3" font-size="5.2" text-anchor="start" font-weight="normal" fill="#000" stroke="#000" stroke-width="0.14">Brake Actuator Assembly</text>
<text x="1521.4" y="394.5" font-size="5.2" text-anchor="start" font-weight="bold" fill="#1a2633" stroke="#1a2633" stroke-width="0">CANH</text>
<text x="1565.9" y="394.5" font-size="5.2" text-anchor="start" font-weight="bold" fill="#1a2633" stroke="#1a2633" stroke-width="0">CANL</text>
<text x="1525.9" y="405.0" font-size="5.2" text-anchor="end" font-weight="normal" fill="#000" stroke="#000" stroke-width="0.14">26</text>
<text x="1569.9" y="405.0" font-size="5.2" text-anchor="end" font-weight="normal" fill="#000" stroke="#000" stroke-width="0.14">14</text>
<rect x="424.5" y="530.1" width="656.0" height="44.3" fill="#c6e6f8" stroke="#2e2e2e" stroke-width="1.3"/>
<line x1="483.7" y1="545.0" x2="1065.4" y2="545.0" stroke="#222" stroke-width="1"/>
<line x1="439.5" y1="559.7" x2="1021.0" y2="559.7" stroke="#222" stroke-width="1"/>
<line x1="439.5" y1="530.1" x2="439.5" y2="574.4" stroke="#222" stroke-width="1"/>
<line x1="483.7" y1="530.1" x2="483.7" y2="574.4" stroke="#222" stroke-width="1"/>
<line x1="690.0" y1="530.1" x2="690.0" y2="574.4" stroke="#222" stroke-width="1"/>
<line x1="734.2" y1="530.1" x2="734.2" y2="574.4" stroke="#222" stroke-width="1"/>
<line x1="910.5" y1="530.1" x2="910.5" y2="574.4" stroke="#222" stroke-width="1"/>
<line x1="955.0" y1="530.1" x2="955.0" y2="574.4" stroke="#222" stroke-width="1"/>
<line x1="1021.0" y1="530.1" x2="1021.0" y2="574.4" stroke="#222" stroke-width="1"/>
<line x1="1065.4" y1="530.1" x2="1065.4" y2="574.4" stroke="#222" stroke-width="1"/>
<line x1="565.0" y1="530.1" x2="565.0" y2="559.7" stroke="#222" stroke-width="1"/>
<line x1="608.5" y1="530.1" x2="608.5" y2="545.0" stroke="#222" stroke-width="1"/>
<circle cx="483.7" cy="545.0" r="1.8" fill="#111"/>
<circle cx="608.5" cy="545.0" r="1.8" fill="#111"/>
<circle cx="734.2" cy="545.0" r="1.8" fill="#111"/>
<circle cx="955.0" cy="545.0" r="1.8" fill="#111"/>
<circle cx="1065.4" cy="545.0" r="1.8" fill="#111"/>
<circle cx="439.5" cy="559.7" r="1.8" fill="#111"/>
<circle cx="565.0" cy="559.7" r="1.8" fill="#111"/>
<circle cx="690.0" cy="559.7" r="1.8" fill="#111"/>
<circle cx="910.5" cy="559.7" r="1.8" fill="#111"/>
<circle cx="1021.0" cy="559.7" r="1.8" fill="#111"/>
<rect x="1367.0" y="530.1" width="221.4" height="44.3" fill="#c6e6f8" stroke="#2e2e2e" stroke-width="1.3"/>
<line x1="1426.0" y1="545.0" x2="1573.4" y2="545.0" stroke="#222" stroke-width="1"/>
<line x1="1381.8" y1="559.7" x2="1529.4" y2="559.7" stroke="#222" stroke-width="1"/>
<line x1="1381.8" y1="530.1" x2="1381.8" y2="574.4" stroke="#222" stroke-width="1"/>
<line x1="1426.0" y1="530.1" x2="1426.0" y2="574.4" stroke="#222" stroke-width="1"/>
<line x1="1529.4" y1="530.1" x2="1529.4" y2="574.4" stroke="#222" stroke-width="1"/>
<line x1="1573.4" y1="530.1" x2="1573.4" y2="574.4" stroke="#222" stroke-width="1"/>
<circle cx="1426.0" cy="545.0" r="1.8" fill="#111"/>
<circle cx="1573.4" cy="545.0" r="1.8" fill="#111"/>
<circle cx="1381.8" cy="559.7" r="1.8" fill="#111"/>
<circle cx="1529.4" cy="559.7" r="1.8" fill="#111"/>
<text x="1082.5" y="531.5" font-size="5.6" text-anchor="start" font-weight="normal" fill="#000" stroke="#000" stroke-width="0.14">D43</text>
<text x="1082.5" y="538.3" font-size="5.3" letter-spacing="-0.04" fill="#000" stroke="#000" stroke-width="0.14">Junction Connector</text>
<text x="761.0" y="581.0" font-size="5.6" text-anchor="start" font-weight="normal" fill="#000" stroke="#000" stroke-width="0.14">D43</text>
<text x="761.0" y="587.5" font-size="5.3" letter-spacing="-0.04" fill="#000" stroke="#000" stroke-width="0.14">Junction Connector</text>
<text x="1590.5" y="531.5" font-size="5.6" text-anchor="start" font-weight="normal" fill="#000" stroke="#000" stroke-width="0.14">A17</text>
<text x="1590.5" y="538.3" font-size="5.3" letter-spacing="-0.04" fill="#000" stroke="#000" stroke-width="0.14">Junction Connector</text>
<text x="436.2" y="527.3" font-size="5.2" text-anchor="end" font-weight="normal" fill="#000" stroke="#000" stroke-width="0.14">8</text>
<text x="480.4" y="527.3" font-size="5.2" text-anchor="end" font-weight="normal" fill="#000" stroke="#000" stroke-width="0.14">19</text>
<text x="561.7" y="527.3" font-size="5.2" text-anchor="end" font-weight="normal" fill="#000" stroke="#000" stroke-width="0.14">2</text>
<text x="605.2" y="527.3" font-size="5.2" text-anchor="end" font-weight="normal" fill="#000" stroke="#000" stroke-width="0.14">13</text>
<text x="686.7" y="527.3" font-size="5.2" text-anchor="end" font-weight="normal" fill="#000" stroke="#000" stroke-width="0.14">6</text>
<text x="730.9" y="527.3" font-size="5.2" text-anchor="end" font-weight="normal" fill="#000" stroke="#000" stroke-width="0.14">17</text>
<text x="907.2" y="527.3" font-size="5.2" text-anchor="end" font-weight="normal" fill="#000" stroke="#000" stroke-width="0.14">10</text>
<text x="951.7" y="527.3" font-size="5.2" text-anchor="end" font-weight="normal" fill="#000" stroke="#000" stroke-width="0.14">21</text>
<text x="1017.7" y="527.3" font-size="5.2" text-anchor="end" font-weight="normal" fill="#000" stroke="#000" stroke-width="0.14">4</text>
<text x="1062.1" y="527.3" font-size="5.2" text-anchor="end" font-weight="normal" fill="#000" stroke="#000" stroke-width="0.14">15</text>
<text x="1378.5" y="527.3" font-size="5.2" text-anchor="end" font-weight="normal" fill="#000" stroke="#000" stroke-width="0.14">8</text>
<text x="1422.7" y="527.3" font-size="5.2" text-anchor="end" font-weight="normal" fill="#000" stroke="#000" stroke-width="0.14">19</text>
<text x="1526.1" y="527.3" font-size="5.2" text-anchor="end" font-weight="normal" fill="#000" stroke="#000" stroke-width="0.14">6</text>
<text x="1570.1" y="527.3" font-size="5.2" text-anchor="end" font-weight="normal" fill="#000" stroke="#000" stroke-width="0.14">17</text>
<text x="436.2" y="581.0" font-size="5.2" text-anchor="end" font-weight="normal" fill="#000" stroke="#000" stroke-width="0.14">1</text>
<text x="480.4" y="581.0" font-size="5.2" text-anchor="end" font-weight="normal" fill="#000" stroke="#000" stroke-width="0.14">12</text>
<text x="686.7" y="581.0" font-size="5.2" text-anchor="end" font-weight="normal" fill="#000" stroke="#000" stroke-width="0.14">3</text>
<text x="730.9" y="581.0" font-size="5.2" text-anchor="end" font-weight="normal" fill="#000" stroke="#000" stroke-width="0.14">14</text>
<text x="907.2" y="581.0" font-size="5.2" text-anchor="end" font-weight="normal" fill="#000" stroke="#000" stroke-width="0.14">5</text>
<text x="951.7" y="581.0" font-size="5.2" text-anchor="end" font-weight="normal" fill="#000" stroke="#000" stroke-width="0.14">16</text>
<text x="1017.7" y="581.0" font-size="5.2" text-anchor="end" font-weight="normal" fill="#000" stroke="#000" stroke-width="0.14">9</text>
<text x="1062.1" y="581.0" font-size="5.2" text-anchor="end" font-weight="normal" fill="#000" stroke="#000" stroke-width="0.14">20</text>
<text x="1378.5" y="581.0" font-size="5.2" text-anchor="end" font-weight="normal" fill="#000" stroke="#000" stroke-width="0.14">7</text>
<text x="1422.7" y="581.0" font-size="5.2" text-anchor="end" font-weight="normal" fill="#000" stroke="#000" stroke-width="0.14">18</text>
<text x="1526.1" y="581.0" font-size="5.2" text-anchor="end" font-weight="normal" fill="#000" stroke="#000" stroke-width="0.14">5</text>
<text x="1570.1" y="581.0" font-size="5.2" text-anchor="end" font-weight="normal" fill="#000" stroke="#000" stroke-width="0.14">16</text>
<rect x="675.2" y="677.0" width="73.8" height="37.2" fill="#c6e6f8" stroke="#2e2e2e" stroke-width="1.3"/>
<text x="682.0" y="683.5" font-size="5.2" text-anchor="start" font-weight="bold" fill="#1a2633" stroke="#1a2633" stroke-width="0">CANH</text>
<text x="726.7" y="683.5" font-size="5.2" text-anchor="start" font-weight="bold" fill="#1a2633" stroke="#1a2633" stroke-width="0">CANL</text>
<text x="673.7" y="721.2" font-size="5.3" text-anchor="start" font-weight="normal" fill="#000" stroke="#000" stroke-width="0.14">D5(B)</text>
<text x="673.7" y="727.0" font-size="5.2" text-anchor="start" font-weight="normal" fill="#000" stroke="#000" stroke-width="0.14">Main Body ECU</text>
<circle cx="690.0" cy="673.3" r="4" fill="#fff" stroke="#222" stroke-width="1"/>
<text x="690.0" y="675.3" font-size="5" text-anchor="middle" font-weight="normal" fill="#000" stroke="#000" stroke-width="0.14">B</text>
<text x="684.5" y="675.3" font-size="5.2" text-anchor="end" font-weight="normal" fill="#000" stroke="#000" stroke-width="0.14">14</text>
<circle cx="734.2" cy="673.3" r="4" fill="#fff" stroke="#222" stroke-width="1"/>
<text x="734.2" y="675.3" font-size="5" text-anchor="middle" font-weight="normal" fill="#000" stroke="#000" stroke-width="0.14">B</text>
<text x="728.7" y="675.3" font-size="5.2" text-anchor="end" font-weight="normal" fill="#000" stroke="#000" stroke-width="0.14">13</text>
<rect x="896.0" y="677.0" width="73.7" height="37.2" fill="#c6e6f8" stroke="#2e2e2e" stroke-width="1.3"/>
<text x="902.5" y="683.5" font-size="5.2" text-anchor="start" font-weight="bold" fill="#1a2633" stroke="#1a2633" stroke-width="0">CANH</text>
<text x="947.5" y="683.5" font-size="5.2" text-anchor="start" font-weight="bold" fill="#1a2633" stroke="#1a2633" stroke-width="0">CANL</text>
<text x="894.5" y="721.2" font-size="5.3" text-anchor="start" font-weight="normal" fill="#000" stroke="#000" stroke-width="0.14">D10</text>
<text x="894.5" y="727.0" font-size="5.2" text-anchor="start" font-weight="normal" fill="#000" stroke="#000" stroke-width="0.14">DLC3</text>
<text x="907.0" y="675.2" font-size="5.2" text-anchor="end" font-weight="normal" fill="#000" stroke="#000" stroke-width="0.14">6</text>
<text x="951.5" y="675.2" font-size="5.2" text-anchor="end" font-weight="normal" fill="#000" stroke="#000" stroke-width="0.14">14</text>
<rect x="1367.3" y="772.9" width="73.7" height="37.0" fill="#c6e6f8" stroke="#2e2e2e" stroke-width="1.3"/>
<text x="1373.8" y="779.4" font-size="5.2" text-anchor="start" font-weight="bold" fill="#1a2633" stroke="#1a2633" stroke-width="0">CANH</text>
<text x="1418.5" y="779.4" font-size="5.2" text-anchor="start" font-weight="bold" fill="#1a2633" stroke="#1a2633" stroke-width="0">CANL</text>
<text x="1365.8" y="816.9" font-size="5.3" text-anchor="start" font-weight="normal" fill="#000" stroke="#000" stroke-width="0.14">A33(A)</text>
<text x="1365.8" y="822.7" font-size="5.2" text-anchor="start" font-weight="normal" fill="#000" stroke="#000" stroke-width="0.14">ECM</text>
<circle cx="1381.8" cy="769.2" r="4" fill="#fff" stroke="#222" stroke-width="1"/>
<text x="1381.8" y="771.2" font-size="5" text-anchor="middle" font-weight="normal" fill="#000" stroke="#000" stroke-width="0.14">A</text>
<text x="1376.3" y="771.2" font-size="5.2" text-anchor="end" font-weight="normal" fill="#000" stroke="#000" stroke-width="0.14">19</text>
<circle cx="1426.0" cy="769.2" r="4" fill="#fff" stroke="#222" stroke-width="1"/>
<text x="1426.0" y="771.2" font-size="5" text-anchor="middle" font-weight="normal" fill="#000" stroke="#000" stroke-width="0.14">A</text>
<text x="1420.5" y="771.2" font-size="5.2" text-anchor="end" font-weight="normal" fill="#000" stroke="#000" stroke-width="0.14">18</text>
<rect x="1514.5" y="772.9" width="73.9" height="37.0" fill="#c6e6f8" stroke="#2e2e2e" stroke-width="1.3"/>
<text x="1521.4" y="779.4" font-size="5.2" text-anchor="start" font-weight="bold" fill="#1a2633" stroke="#1a2633" stroke-width="0">CANH</text>
<text x="1565.9" y="779.4" font-size="5.2" text-anchor="start" font-weight="bold" fill="#1a2633" stroke="#1a2633" stroke-width="0">CANL</text>
<text x="1513.0" y="816.9" font-size="5.3" text-anchor="start" font-weight="normal" fill="#000" stroke="#000" stroke-width="0.14">A18(A)</text>
<text x="1513.0" y="822.7" font-size="5.2" text-anchor="start" font-weight="normal" fill="#000" stroke="#000" stroke-width="0.14">Transmission Control ECU Assembly</text>
<circle cx="1529.4" cy="769.2" r="4" fill="#fff" stroke="#222" stroke-width="1"/>
<text x="1529.4" y="771.2" font-size="5" text-anchor="middle" font-weight="normal" fill="#000" stroke="#000" stroke-width="0.14">A</text>
<text x="1523.9" y="771.2" font-size="5.2" text-anchor="end" font-weight="normal" fill="#000" stroke="#000" stroke-width="0.14">29</text>
<circle cx="1573.4" cy="769.2" r="4" fill="#fff" stroke="#222" stroke-width="1"/>
<text x="1573.4" y="771.2" font-size="5" text-anchor="middle" font-weight="normal" fill="#000" stroke="#000" stroke-width="0.14">A</text>
<text x="1567.9" y="771.2" font-size="5.2" text-anchor="end" font-weight="normal" fill="#000" stroke="#000" stroke-width="0.14">28</text>
<rect x="432.5" y="633.5" width="15" height="14.5" fill="#fff" stroke="#1a1a1a" stroke-width="1.1"/>
<line x1="432.5" y1="640.5" x2="447.5" y2="640.5" stroke="#1a1a1a" stroke-width="1"/>
<path d="M433.8 639.8 V634.6 H445.6" fill="none" stroke="#999" stroke-width="0.5"/>
<path d="M433.8 647.2 V642.1 H445.6" fill="none" stroke="#999" stroke-width="0.5"/>
<text x="439.7" y="639.2" font-size="5.3" text-anchor="middle" font-weight="normal" fill="#000" stroke="#000" stroke-width="0.14">AD1</text>
<text x="439.7" y="646.6" font-size="5.3" text-anchor="middle" font-weight="normal" fill="#000" stroke="#000" stroke-width="0.14">AD2</text>
<path d="M435.4 624.6 L439.7 628.6 L444.0 624.6 M435.4 628 L439.7 632 L444.0 628" fill="none" stroke="#111" stroke-width="1.25"/>
<rect x="476.5" y="633.5" width="15" height="14.5" fill="#fff" stroke="#1a1a1a" stroke-width="1.1"/>
<line x1="476.5" y1="640.5" x2="491.5" y2="640.5" stroke="#1a1a1a" stroke-width="1"/>
<path d="M477.8 639.8 V634.6 H489.6" fill="none" stroke="#999" stroke-width="0.5"/>
<path d="M477.8 647.2 V642.1 H489.6" fill="none" stroke="#999" stroke-width="0.5"/>
<text x="483.7" y="639.2" font-size="5.3" text-anchor="middle" font-weight="normal" fill="#000" stroke="#000" stroke-width="0.14">AD1</text>
<text x="483.7" y="646.6" font-size="5.3" text-anchor="middle" font-weight="normal" fill="#000" stroke="#000" stroke-width="0.14">AD2</text>
<path d="M479.4 624.6 L483.7 628.6 L488.0 624.6 M479.4 628 L483.7 632 L488.0 628" fill="none" stroke="#111" stroke-width="1.25"/>
<text x="429.0" y="639.3" font-size="5.2" text-anchor="end" font-weight="normal" fill="#000" stroke="#000" stroke-width="0.14">21</text>
<text x="429.0" y="646.7" font-size="5.2" text-anchor="end" font-weight="normal" fill="#000" stroke="#000" stroke-width="0.14">21</text>
<line x1="450.5" y1="637.5" x2="465.5" y2="637.5" stroke="#333" stroke-width="1.1" stroke-dasharray="2.3,0.9"/>
<line x1="450.5" y1="645.5" x2="465.5" y2="645.5" stroke="#333" stroke-width="1.1" stroke-dasharray="2.3,0.9"/>
<text x="473.5" y="639.3" font-size="5.2" text-anchor="end" font-weight="normal" fill="#000" stroke="#000" stroke-width="0.14">39</text>
<text x="473.5" y="646.7" font-size="5.2" text-anchor="end" font-weight="normal" fill="#000" stroke="#000" stroke-width="0.14">39</text>
<text x="492.5" y="639.3" font-size="5.4" text-anchor="start" font-weight="normal" fill="#000" stroke="#000" stroke-width="0.14">(LHD)</text>
<text x="492.5" y="646.7" font-size="5.4" text-anchor="start" font-weight="normal" fill="#000" stroke="#000" stroke-width="0.14">(RHD)</text>
<rect x="1013.5" y="633.5" width="15" height="14.5" fill="#fff" stroke="#1a1a1a" stroke-width="1.1"/>
<line x1="1013.5" y1="640.5" x2="1028.5" y2="640.5" stroke="#1a1a1a" stroke-width="1"/>
<path d="M1015.1 639.8 V634.6 H1026.9" fill="none" stroke="#999" stroke-width="0.5"/>
<path d="M1015.1 647.2 V642.1 H1026.9" fill="none" stroke="#999" stroke-width="0.5"/>
<text x="1021.0" y="639.2" font-size="5.3" text-anchor="middle" font-weight="normal" fill="#000" stroke="#000" stroke-width="0.14">AD2</text>
<text x="1021.0" y="646.6" font-size="5.3" text-anchor="middle" font-weight="normal" fill="#000" stroke="#000" stroke-width="0.14">AD1</text>
<path d="M1016.7 624.6 L1021.0 628.6 L1025.3 624.6 M1016.7 628 L1021.0 632 L1025.3 628" fill="none" stroke="#111" stroke-width="1.25"/>
<rect x="1058.5" y="633.5" width="15" height="14.5" fill="#fff" stroke="#1a1a1a" stroke-width="1.1"/>
<line x1="1058.5" y1="640.5" x2="1073.5" y2="640.5" stroke="#1a1a1a" stroke-width="1"/>
<path d="M1059.4 639.8 V634.6 H1071.2" fill="none" stroke="#999" stroke-width="0.5"/>
<path d="M1059.4 647.2 V642.1 H1071.2" fill="none" stroke="#999" stroke-width="0.5"/>
<text x="1065.3" y="639.2" font-size="5.3" text-anchor="middle" font-weight="normal" fill="#000" stroke="#000" stroke-width="0.14">AD2</text>
<text x="1065.3" y="646.6" font-size="5.3" text-anchor="middle" font-weight="normal" fill="#000" stroke="#000" stroke-width="0.14">AD1</text>
<path d="M1061.0 624.6 L1065.3 628.6 L1069.6 624.6 M1061.0 628 L1065.3 632 L1069.6 628" fill="none" stroke="#111" stroke-width="1.25"/>
<text x="1010.3" y="639.3" font-size="5.2" text-anchor="end" font-weight="normal" fill="#000" stroke="#000" stroke-width="0.14">21</text>
<text x="1010.3" y="646.7" font-size="5.2" text-anchor="end" font-weight="normal" fill="#000" stroke="#000" stroke-width="0.14">21</text>
<line x1="1031.8" y1="637.5" x2="1046.8" y2="637.5" stroke="#333" stroke-width="1.1" stroke-dasharray="2.3,0.9"/>
<line x1="1031.8" y1="645.5" x2="1046.8" y2="645.5" stroke="#333" stroke-width="1.1" stroke-dasharray="2.3,0.9"/>
<text x="1055.1" y="639.3" font-size="5.2" text-anchor="end" font-weight="normal" fill="#000" stroke="#000" stroke-width="0.14">39</text>
<text x="1055.1" y="646.7" font-size="5.2" text-anchor="end" font-weight="normal" fill="#000" stroke="#000" stroke-width="0.14">39</text>
<text x="1074.1" y="639.3" font-size="5.4" text-anchor="start" font-weight="normal" fill="#000" stroke="#000" stroke-width="0.14">(LHD)</text>
<text x="1074.1" y="646.7" font-size="5.4" text-anchor="start" font-weight="normal" fill="#000" stroke="#000" stroke-width="0.14">(RHD)</text>
<text x="436.0" y="480.5" font-size="5.6" text-anchor="middle" font-weight="normal" fill="#000" transform="rotate(-90 436.0 480.5)" stroke="#000" stroke-width="0.28">P-L</text>
<text x="480.0" y="480.5" font-size="5.6" text-anchor="middle" font-weight="normal" fill="#000" transform="rotate(-90 480.0 480.5)" stroke="#000" stroke-width="0.28">R-W</text>
<text x="562.0" y="480.5" font-size="5.6" text-anchor="middle" font-weight="normal" fill="#000" transform="rotate(-90 562.0 480.5)" stroke="#000" stroke-width="0.28">BR</text>
<text x="605.5" y="480.5" font-size="5.6" text-anchor="middle" font-weight="normal" fill="#000" transform="rotate(-90 605.5 480.5)" stroke="#000" stroke-width="0.28">BR-W</text>
<text x="687.5" y="480.5" font-size="5.6" text-anchor="middle" font-weight="normal" fill="#000" transform="rotate(-90 687.5 480.5)" stroke="#000" stroke-width="0.28">G-W</text>
<text x="731.5" y="480.5" font-size="5.6" text-anchor="middle" font-weight="normal" fill="#000" transform="rotate(-90 731.5 480.5)" stroke="#000" stroke-width="0.28">G</text>
<text x="907.3" y="480.5" font-size="5.6" text-anchor="middle" font-weight="normal" fill="#000" transform="rotate(-90 907.3 480.5)" stroke="#000" stroke-width="0.28">L-W</text>
<text x="917.9" y="480.5" font-size="5.6" text-anchor="middle" font-weight="normal" fill="#000" transform="rotate(-90 917.9 480.5)" stroke="#000" stroke-width="0.28">(*1)</text>
<text x="951.8" y="480.5" font-size="5.6" text-anchor="middle" font-weight="normal" fill="#000" transform="rotate(-90 951.8 480.5)" stroke="#000" stroke-width="0.28">L-Y</text>
<text x="962.4" y="480.5" font-size="5.6" text-anchor="middle" font-weight="normal" fill="#000" transform="rotate(-90 962.4 480.5)" stroke="#000" stroke-width="0.28">(*1)</text>
<text x="1017.8" y="480.5" font-size="5.6" text-anchor="middle" font-weight="normal" fill="#000" transform="rotate(-90 1017.8 480.5)" stroke="#000" stroke-width="0.28">G</text>
<text x="1028.4" y="480.5" font-size="5.6" text-anchor="middle" font-weight="normal" fill="#000" transform="rotate(-90 1028.4 480.5)" stroke="#000" stroke-width="0.28">(*2)</text>
<text x="1062.2" y="480.5" font-size="5.6" text-anchor="middle" font-weight="normal" fill="#000" transform="rotate(-90 1062.2 480.5)" stroke="#000" stroke-width="0.28">R</text>
<text x="1072.8" y="480.5" font-size="5.6" text-anchor="middle" font-weight="normal" fill="#000" transform="rotate(-90 1072.8 480.5)" stroke="#000" stroke-width="0.28">(*2)</text>
<text x="1379.6" y="465.0" font-size="5.6" text-anchor="middle" font-weight="normal" fill="#000" transform="rotate(-90 1379.6 465.0)" stroke="#000" stroke-width="0.28">B</text>
<text x="1423.8" y="465.0" font-size="5.6" text-anchor="middle" font-weight="normal" fill="#000" transform="rotate(-90 1423.8 465.0)" stroke="#000" stroke-width="0.28">V</text>
<text x="1526.2" y="464.5" font-size="5.6" text-anchor="middle" font-weight="normal" fill="#000" transform="rotate(-90 1526.2 464.5)" stroke="#000" stroke-width="0.28">BR</text>
<text x="1536.8" y="464.5" font-size="5.6" text-anchor="middle" font-weight="normal" fill="#000" transform="rotate(-90 1536.8 464.5)" stroke="#000" stroke-width="0.28">(LHD)</text>
<text x="1570.2" y="464.5" font-size="5.6" text-anchor="middle" font-weight="normal" fill="#000" transform="rotate(-90 1570.2 464.5)" stroke="#000" stroke-width="0.28">B-R</text>
<text x="1580.8" y="464.5" font-size="5.6" text-anchor="middle" font-weight="normal" fill="#000" transform="rotate(-90 1580.8 464.5)" stroke="#000" stroke-width="0.28">(LHD)</text>
<text x="1665.8" y="464.5" font-size="5.6" text-anchor="middle" font-weight="normal" fill="#000" transform="rotate(-90 1665.8 464.5)" stroke="#000" stroke-width="0.28">BR</text>
<text x="1676.4" y="464.5" font-size="5.6" text-anchor="middle" font-weight="normal" fill="#000" transform="rotate(-90 1676.4 464.5)" stroke="#000" stroke-width="0.28">(RHD)</text>
<text x="1695.2" y="464.5" font-size="5.6" text-anchor="middle" font-weight="normal" fill="#000" transform="rotate(-90 1695.2 464.5)" stroke="#000" stroke-width="0.28">B-R</text>
<text x="1705.8" y="464.5" font-size="5.6" text-anchor="middle" font-weight="normal" fill="#000" transform="rotate(-90 1705.8 464.5)" stroke="#000" stroke-width="0.28">(RHD)</text>
<text x="436.3" y="605.0" font-size="5.6" text-anchor="middle" font-weight="normal" fill="#000" transform="rotate(-90 436.3 605.0)" stroke="#000" stroke-width="0.28">W-B</text>
<text x="480.5" y="605.0" font-size="5.6" text-anchor="middle" font-weight="normal" fill="#000" transform="rotate(-90 480.5 605.0)" stroke="#000" stroke-width="0.28">R-Y</text>
<text x="686.8" y="605.0" font-size="5.6" text-anchor="middle" font-weight="normal" fill="#000" transform="rotate(-90 686.8 605.0)" stroke="#000" stroke-width="0.28">P</text>
<text x="731.0" y="605.0" font-size="5.6" text-anchor="middle" font-weight="normal" fill="#000" transform="rotate(-90 731.0 605.0)" stroke="#000" stroke-width="0.28">LG</text>
<text x="907.3" y="605.0" font-size="5.6" text-anchor="middle" font-weight="normal" fill="#000" transform="rotate(-90 907.3 605.0)" stroke="#000" stroke-width="0.28">B-Y</text>
<text x="951.8" y="605.0" font-size="5.6" text-anchor="middle" font-weight="normal" fill="#000" transform="rotate(-90 951.8 605.0)" stroke="#000" stroke-width="0.28">LG</text>
<text x="1017.8" y="605.0" font-size="5.6" text-anchor="middle" font-weight="normal" fill="#000" transform="rotate(-90 1017.8 605.0)" stroke="#000" stroke-width="0.28">O</text>
<text x="1062.2" y="605.0" font-size="5.6" text-anchor="middle" font-weight="normal" fill="#000" transform="rotate(-90 1062.2 605.0)" stroke="#000" stroke-width="0.28">B-P</text>
<text x="1378.6" y="663.5" font-size="5.6" text-anchor="middle" font-weight="normal" fill="#000" transform="rotate(-90 1378.6 663.5)" stroke="#000" stroke-width="0.28">O</text>
<text x="1389.2" y="663.5" font-size="5.6" text-anchor="middle" font-weight="normal" fill="#000" transform="rotate(-90 1389.2 663.5)" stroke="#000" stroke-width="0.28">(RHD)</text>
<text x="1422.8" y="663.5" font-size="5.6" text-anchor="middle" font-weight="normal" fill="#000" transform="rotate(-90 1422.8 663.5)" stroke="#000" stroke-width="0.28">B-P</text>
<text x="1433.4" y="663.5" font-size="5.6" text-anchor="middle" font-weight="normal" fill="#000" transform="rotate(-90 1433.4 663.5)" stroke="#000" stroke-width="0.28">(RHD)</text>
<text x="1526.2" y="663.5" font-size="5.6" text-anchor="middle" font-weight="normal" fill="#000" transform="rotate(-90 1526.2 663.5)" stroke="#000" stroke-width="0.28">B-W</text>
<text x="1536.8" y="663.5" font-size="5.6" text-anchor="middle" font-weight="normal" fill="#000" transform="rotate(-90 1536.8 663.5)" stroke="#000" stroke-width="0.28">(A/T)</text>
<text x="1570.2" y="663.5" font-size="5.6" text-anchor="middle" font-weight="normal" fill="#000" transform="rotate(-90 1570.2 663.5)" stroke="#000" stroke-width="0.28">L</text>
<text x="1580.8" y="663.5" font-size="5.6" text-anchor="middle" font-weight="normal" fill="#000" transform="rotate(-90 1580.8 663.5)" stroke="#000" stroke-width="0.28">(A/T)</text>
<text x="435.9" y="700.0" font-size="5.6" text-anchor="middle" font-weight="normal" fill="#000" transform="rotate(-90 435.9 700.0)" stroke="#000" stroke-width="0.28">BR</text>
<text x="446.5" y="700.0" font-size="5.6" text-anchor="middle" font-weight="normal" fill="#000" transform="rotate(-90 446.5 700.0)" stroke="#000" stroke-width="0.28">(RHD)</text>
<text x="458.0" y="700.0" font-size="5.6" text-anchor="middle" font-weight="normal" fill="#000" transform="rotate(-90 458.0 700.0)" stroke="#000" stroke-width="0.28">W-B</text>
<text x="468.6" y="700.0" font-size="5.6" text-anchor="middle" font-weight="normal" fill="#000" transform="rotate(-90 468.6 700.0)" stroke="#000" stroke-width="0.28">(LHD)</text>
<text x="480.1" y="700.0" font-size="5.6" text-anchor="middle" font-weight="normal" fill="#000" transform="rotate(-90 480.1 700.0)" stroke="#000" stroke-width="0.28">B-R</text>
<text x="490.7" y="700.0" font-size="5.6" text-anchor="middle" font-weight="normal" fill="#000" transform="rotate(-90 490.7 700.0)" stroke="#000" stroke-width="0.28">(RHD)</text>
<text x="502.4" y="700.0" font-size="5.6" text-anchor="middle" font-weight="normal" fill="#000" transform="rotate(-90 502.4 700.0)" stroke="#000" stroke-width="0.28">R-Y</text>
<text x="513.0" y="700.0" font-size="5.6" text-anchor="middle" font-weight="normal" fill="#000" transform="rotate(-90 513.0 700.0)" stroke="#000" stroke-width="0.28">(LHD)</text>
<text x="813.4" y="791.8" font-size="5.6" text-anchor="middle" font-weight="normal" fill="#000" stroke="#000" stroke-width="0.14">R-Y</text>
<text x="813.4" y="801.6" font-size="5.5" text-anchor="middle" font-weight="normal" fill="#000" stroke="#000" stroke-width="0.14">(LHD)</text>
<text x="857.4" y="791.8" font-size="5.6" text-anchor="middle" font-weight="normal" fill="#000" stroke="#000" stroke-width="0.14">R-Y</text>
<text x="857.4" y="801.6" font-size="5.5" text-anchor="middle" font-weight="normal" fill="#000" stroke="#000" stroke-width="0.14">(LHD)</text>
<text x="813.4" y="813.9" font-size="5.6" text-anchor="middle" font-weight="normal" fill="#000" stroke="#000" stroke-width="0.14">W-B</text>
<text x="813.4" y="823.7" font-size="5.5" text-anchor="middle" font-weight="normal" fill="#000" stroke="#000" stroke-width="0.14">(LHD)</text>
<text x="857.4" y="813.9" font-size="5.6" text-anchor="middle" font-weight="normal" fill="#000" stroke="#000" stroke-width="0.14">W-B</text>
<text x="857.4" y="823.7" font-size="5.5" text-anchor="middle" font-weight="normal" fill="#000" stroke="#000" stroke-width="0.14">(LHD)</text>
<text x="813.4" y="836.0" font-size="5.6" text-anchor="middle" font-weight="normal" fill="#000" stroke="#000" stroke-width="0.14">B-R</text>
<text x="813.4" y="845.8" font-size="5.5" text-anchor="middle" font-weight="normal" fill="#000" stroke="#000" stroke-width="0.14">(RHD)</text>
<text x="857.4" y="836.0" font-size="5.6" text-anchor="middle" font-weight="normal" fill="#000" stroke="#000" stroke-width="0.14">B-R</text>
<text x="857.4" y="845.8" font-size="5.5" text-anchor="middle" font-weight="normal" fill="#000" stroke="#000" stroke-width="0.14">(RHD)</text>
<text x="813.4" y="858.2" font-size="5.6" text-anchor="middle" font-weight="normal" fill="#000" stroke="#000" stroke-width="0.14">BR</text>
<text x="813.4" y="868.0" font-size="5.5" text-anchor="middle" font-weight="normal" fill="#000" stroke="#000" stroke-width="0.14">(RHD)</text>
<text x="857.4" y="858.2" font-size="5.6" text-anchor="middle" font-weight="normal" fill="#000" stroke="#000" stroke-width="0.14">BR</text>
<text x="857.4" y="868.0" font-size="5.5" text-anchor="middle" font-weight="normal" fill="#000" stroke="#000" stroke-width="0.14">(RHD)</text>
<text x="1262.3" y="836.0" font-size="5.6" text-anchor="middle" font-weight="normal" fill="#000" stroke="#000" stroke-width="0.14">B-R</text>
<text x="1262.3" y="845.8" font-size="5.5" text-anchor="middle" font-weight="normal" fill="#000" stroke="#000" stroke-width="0.14">(RHD)</text>
<text x="1306.6" y="836.0" font-size="5.6" text-anchor="middle" font-weight="normal" fill="#000" stroke="#000" stroke-width="0.14">B-R</text>
<text x="1306.6" y="845.8" font-size="5.5" text-anchor="middle" font-weight="normal" fill="#000" stroke="#000" stroke-width="0.14">(RHD)</text>
<text x="1262.3" y="858.2" font-size="5.6" text-anchor="middle" font-weight="normal" fill="#000" stroke="#000" stroke-width="0.14">BR</text>
<text x="1262.3" y="868.0" font-size="5.5" text-anchor="middle" font-weight="normal" fill="#000" stroke="#000" stroke-width="0.14">(RHD)</text>
<text x="1306.6" y="858.2" font-size="5.6" text-anchor="middle" font-weight="normal" fill="#000" stroke="#000" stroke-width="0.14">BR</text>
<text x="1306.6" y="868.0" font-size="5.5" text-anchor="middle" font-weight="normal" fill="#000" stroke="#000" stroke-width="0.14">(RHD)</text>
<text x="1262.3" y="483.2" font-size="5.6" text-anchor="middle" font-weight="normal" fill="#000" stroke="#000" stroke-width="0.14">R-Y</text>
<text x="1262.3" y="493.0" font-size="5.5" text-anchor="middle" font-weight="normal" fill="#000" stroke="#000" stroke-width="0.14">(RHD)</text>
<text x="1306.6" y="483.2" font-size="5.6" text-anchor="middle" font-weight="normal" fill="#000" stroke="#000" stroke-width="0.14">R-Y</text>
<text x="1306.6" y="493.0" font-size="5.5" text-anchor="middle" font-weight="normal" fill="#000" stroke="#000" stroke-width="0.14">(RHD)</text>
<text x="1262.3" y="505.2" font-size="5.6" text-anchor="middle" font-weight="normal" fill="#000" stroke="#000" stroke-width="0.14">W-B</text>
<text x="1262.3" y="515.0" font-size="5.5" text-anchor="middle" font-weight="normal" fill="#000" stroke="#000" stroke-width="0.14">(RHD)</text>
<text x="1306.6" y="505.2" font-size="5.6" text-anchor="middle" font-weight="normal" fill="#000" stroke="#000" stroke-width="0.14">W-B</text>
<text x="1306.6" y="515.0" font-size="5.5" text-anchor="middle" font-weight="normal" fill="#000" stroke="#000" stroke-width="0.14">(RHD)</text>
<text x="1475.8" y="483.2" font-size="5.6" text-anchor="middle" font-weight="normal" fill="#000" stroke="#000" stroke-width="0.14">R-Y</text>
<text x="1475.8" y="493.0" font-size="5.5" text-anchor="middle" font-weight="normal" fill="#000" stroke="#000" stroke-width="0.14">(RHD)</text>
<text x="1475.8" y="505.2" font-size="5.6" text-anchor="middle" font-weight="normal" fill="#000" stroke="#000" stroke-width="0.14">W-B</text>
<text x="1475.8" y="515.0" font-size="5.5" text-anchor="middle" font-weight="normal" fill="#000" stroke="#000" stroke-width="0.14">(RHD)</text>
<text x="1262.3" y="593.2" font-size="5.6" text-anchor="middle" font-weight="normal" fill="#000" stroke="#000" stroke-width="0.14">W-B</text>
<text x="1262.3" y="603.0" font-size="5.5" text-anchor="middle" font-weight="normal" fill="#000" stroke="#000" stroke-width="0.14">(LHD)</text>
<text x="1306.6" y="593.2" font-size="5.6" text-anchor="middle" font-weight="normal" fill="#000" stroke="#000" stroke-width="0.14">W-B</text>
<text x="1306.6" y="603.0" font-size="5.5" text-anchor="middle" font-weight="normal" fill="#000" stroke="#000" stroke-width="0.14">(LHD)</text>
<text x="1262.3" y="615.2" font-size="5.6" text-anchor="middle" font-weight="normal" fill="#000" stroke="#000" stroke-width="0.14">R-Y</text>
<text x="1262.3" y="625.0" font-size="5.5" text-anchor="middle" font-weight="normal" fill="#000" stroke="#000" stroke-width="0.14">(LHD)</text>
<text x="1306.6" y="615.2" font-size="5.6" text-anchor="middle" font-weight="normal" fill="#000" stroke="#000" stroke-width="0.14">R-Y</text>
<text x="1306.6" y="625.0" font-size="5.5" text-anchor="middle" font-weight="normal" fill="#000" stroke="#000" stroke-width="0.14">(LHD)</text>
<text x="1262.3" y="717.8" font-size="5.6" text-anchor="middle" font-weight="normal" fill="#000" stroke="#000" stroke-width="0.14">B-P</text>
<text x="1262.3" y="727.6" font-size="5.5" text-anchor="middle" font-weight="normal" fill="#000" stroke="#000" stroke-width="0.14">(LHD)</text>
<text x="1306.6" y="717.8" font-size="5.6" text-anchor="middle" font-weight="normal" fill="#000" stroke="#000" stroke-width="0.14">B-P</text>
<text x="1306.6" y="727.6" font-size="5.5" text-anchor="middle" font-weight="normal" fill="#000" stroke="#000" stroke-width="0.14">(LHD)</text>
<text x="1262.3" y="740.0" font-size="5.6" text-anchor="middle" font-weight="normal" fill="#000" stroke="#000" stroke-width="0.14">O</text>
<text x="1262.3" y="749.8" font-size="5.5" text-anchor="middle" font-weight="normal" fill="#000" stroke="#000" stroke-width="0.14">(LHD)</text>
<text x="1306.6" y="740.0" font-size="5.6" text-anchor="middle" font-weight="normal" fill="#000" stroke="#000" stroke-width="0.14">O</text>
<text x="1306.6" y="749.8" font-size="5.5" text-anchor="middle" font-weight="normal" fill="#000" stroke="#000" stroke-width="0.14">(LHD)</text>
<text x="1048.0" y="317.5" font-size="5.2" text-anchor="start" font-weight="normal" fill="#000" stroke="#000" stroke-width="0.14">* 1 :Automatic A/C</text>
<text x="1048.0" y="325.5" font-size="5.2" text-anchor="start" font-weight="normal" fill="#000" stroke="#000" stroke-width="0.14">* 2 :w/ Entry &amp; Start System</text>
</g>
</svg>

<!-- status bar -->
<div class="a" style="left:0;top:1014px;width:606px;height:20px;background:rgba(245,245,245,0.85);border-top:1px solid #999;border-right:1px solid #bbb"></div>
<div class="a" style="left:3px;top:1015px;font-size:12.2px;line-height:18px;color:#808080;white-space:nowrap">file:///E:/Repairing/Toyota/86/86%20'2012.03/rm2090e/MANUAL.HTM/rm2090e/ewd/ewd/contents/select.html#</div>
</body></html>
